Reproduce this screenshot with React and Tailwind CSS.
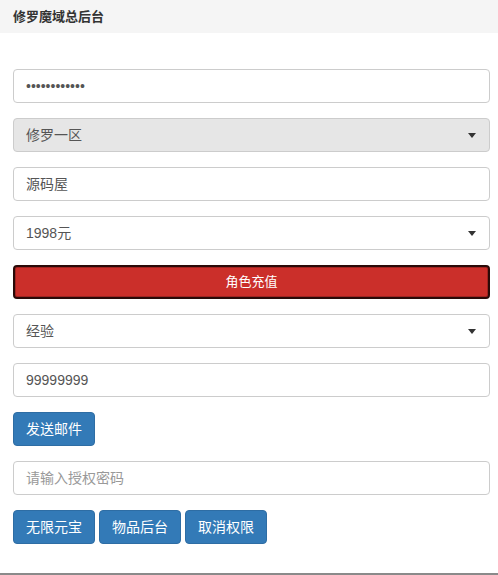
import React from 'react';

const FONT = { fontFamily: '"Liberation Sans", "Noto Sans CJK SC", Arial, sans-serif' };

const Caret = () => (
    <span className="block w-0 h-0 border-l-[4px] border-r-[4px] border-t-[5px] border-l-transparent border-r-transparent border-t-[#333]" />
);

const Field = ({ children, className = '', muted }) => (
    <div className={`h-[34px] flex items-center px-[12px] border border-[#ccc] rounded-[4px] text-[14px] ${muted ? 'text-[#999]' : 'text-[#555]'} ${className}`}>
        {children}
    </div>
);

const Select = ({ label, disabled }) => (
    <Field className={`justify-between ${disabled ? 'bg-[#e6e6e6]' : 'bg-white'}`}>
        <span>{label}</span>
        <span className="flex items-center mr-[1px]"><Caret /></span>
    </Field>
);

const BlueBtn = ({ children }) => (
    <button type="button" className="h-[34px] px-[12px] bg-[#337ab7] border border-[#2e6da4] rounded-[4px] text-white text-[14px] leading-none">
        {children}
    </button>
);

export default function App() {
    return (
        <div style={FONT} className="w-[498px] h-[575px] bg-white border-b-2 border-[#8a8a8a] flex flex-col">
            <div className="h-[33px] bg-[#f5f5f5] flex items-center px-[13px] text-[13px] font-bold text-[#333]">
                修罗魔域总后台
            </div>
            <div className="pt-[36px] pl-[13px] pr-[8px] flex flex-col gap-[15px]">
                <Field>
                    <span className="text-[#555]">••••••••••••</span>
                </Field>
                <Select label="修罗一区" disabled />
                <Field>源码屋</Field>
                <Select label="1998元" />
                <button type="button" className="h-[34px] rounded-[4px] border-2 border-[#2a0a08] bg-[#cb2f2a] shadow-[inset_0_0_0_1px_#a02420] text-white text-[13px]">
                    角色充值
                </button>
                <Select label="经验" />
                <Field>99999999</Field>
                <div className="flex">
                    <BlueBtn>发送邮件</BlueBtn>
                </div>
                <Field muted>请输入授权密码</Field>
                <div className="flex gap-[4px]">
                    <BlueBtn>无限元宝</BlueBtn>
                    <BlueBtn>物品后台</BlueBtn>
                    <BlueBtn>取消权限</BlueBtn>
                </div>
            </div>
        </div>
    );
}
